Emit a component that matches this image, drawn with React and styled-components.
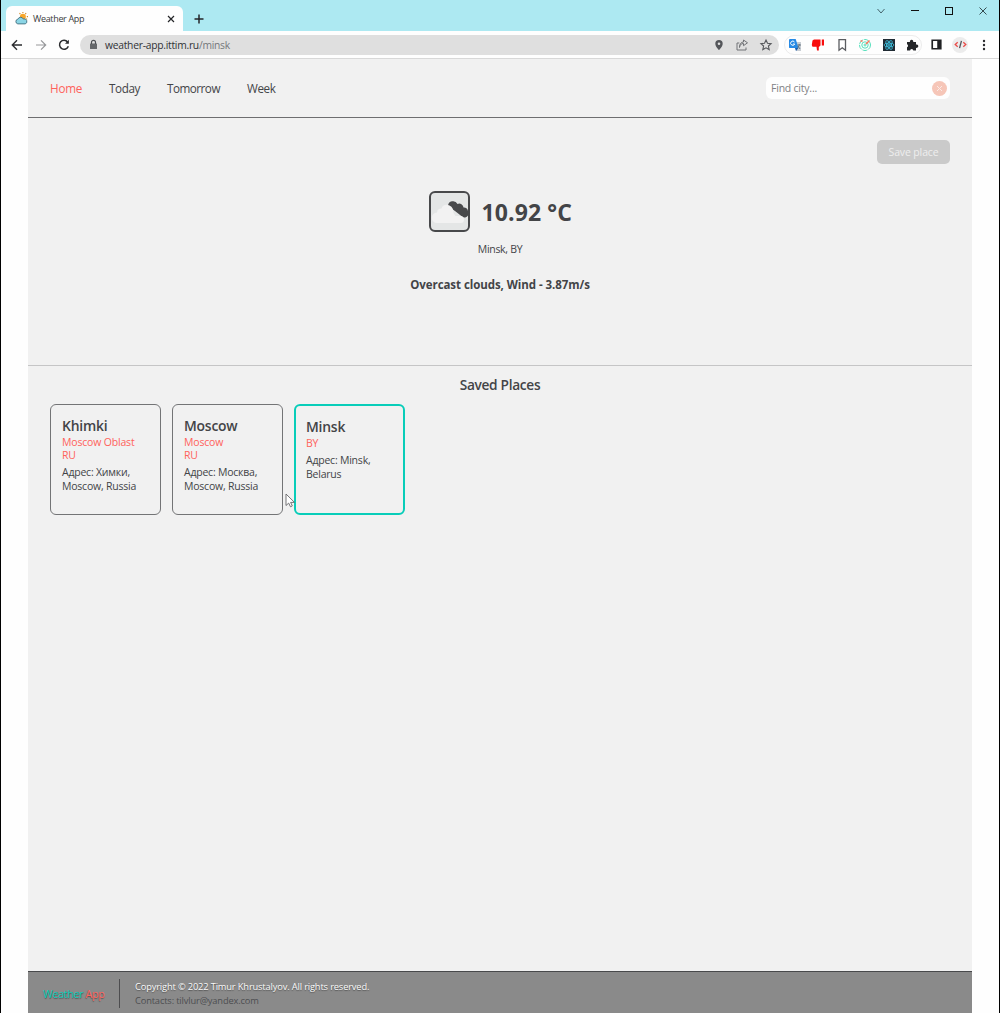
import React from "react";
import styled, { createGlobalStyle } from "styled-components";

const ink = "#434447";
const coral = "#ff625b";
const teal = "#08cdb9";

const GlobalStyle = createGlobalStyle`
  * { box-sizing: border-box; }
  body { margin: 0; background: #fefefe; font-family: "Open Sans", "Noto Sans", sans-serif; color: ${ink}; }
  h1, h2, h3, p { margin: 0; }
`;

const Window = styled.div`
  width: 1000px;
  height: 1013px;
  display: flex;
  flex-direction: column;
  overflow: hidden;
  position: relative;
  border: solid #000;
  border-width: 0 1px;
`;

const TabStrip = styled.div`
  height: 31px;
  flex: none;
  display: flex;
  align-items: flex-end;
  background: #ade9f2;
  padding-left: 5px;
`;

const Tab = styled.div`
  width: 177px;
  height: 25px;
  display: flex;
  align-items: center;
  padding: 0 7px 0 9px;
  background: #fefefe;
  border-radius: 6px 6px 0 0;
`;

const TabTitle = styled.span`
  flex: 1;
  margin-left: 5px;
  font-size: 9px;
  line-height: 12px;
  letter-spacing: -0.34px;
  color: #3a3c40;
  white-space: nowrap;
`;

const NewTab = styled.div`
  height: 25px;
  margin-left: 11px;
  display: flex;
  align-items: center;
`;

const WindowControls = styled.div`
  margin-left: auto;
  align-self: flex-start;
  height: 22px;
  display: flex;
  align-items: center;
  gap: 24px;
  padding-right: 11px;
`;

const Toolbar = styled.div`
  height: 28px;
  flex: none;
  display: flex;
  align-items: center;
  padding: 0 7px 0 9px;
  border-bottom: 1px solid #d8d8d8;
`;

const NavButtons = styled.div`
  display: flex;
  gap: 9.5px;
  width: 70px;
`;

const Omnibox = styled.div`
  width: 699px;
  height: 20px;
  display: flex;
  align-items: center;
  padding: 0 6px 0 8px;
  border-radius: 10px;
  background: #dfdfdf;
`;

const Url = styled.span`
  flex: 1;
  margin-left: 6px;
  font-size: 10.3px;
  line-height: 14px;
  letter-spacing: -0.26px;
  color: #303236;
  span { color: #74777b; }
`;

const OmniIcons = styled.div`
  display: flex;
  gap: 9.7px;
`;

const Extensions = styled.div`
  width: 138px;
  height: 20px;
  margin-left: 5px;
  display: flex;
  align-items: center;
  justify-content: space-between;
  padding: 0 2px 0 3px;
  border: 1px solid #ececec;
  border-radius: 10px;
`;

const BrowserMenu = styled.div`
  display: flex;
  align-items: center;
  margin-left: 8px;
  gap: 9px;
`;

const Avatar = styled.div`
  width: 16px;
  height: 16px;
  display: grid;
  place-items: center;
  border-radius: 50%;
  background: #ececec;
`;

const AppFrame = styled.div`
  flex: 1;
  width: 944px;
  margin: 0 27px;
  display: flex;
  flex-direction: column;
  background: #f1f1f1;
`;

const Header = styled.header`
  height: 59px;
  display: flex;
  align-items: center;
  justify-content: space-between;
  padding: 0 22px;
  border-bottom: 1px solid #6e6e70;
`;

const Nav = styled.nav`
  display: flex;
  gap: 27px;
`;

const NavLink = styled.a`
  width: ${(p) => p.$width}px;
  font-size: 11.7px;
  line-height: 18px;
  letter-spacing: ${(p) => p.$track || 0}px;
  white-space: nowrap;
  color: ${(p) => (p.$active ? coral : ink)};
`;

const Search = styled.div`
  width: 184px;
  height: 22px;
  display: flex;
  align-items: center;
  justify-content: space-between;
  padding: 0 3px 0 5px;
  border-radius: 6px;
  background: #fefefe;
  color: #808184;
  font-size: 10.5px;
  letter-spacing: -0.22px;
`;

const Clear = styled.span`
  width: 15px;
  height: 15px;
  display: grid;
  place-items: center;
  border-radius: 50%;
  background: #f6c6b8;
`;

const Current = styled.main`
  height: 248px;
  display: flex;
  flex-direction: column;
  align-items: center;
  padding: 22px 22px 0;
  border-bottom: 1px solid #c5c5c6;
`;

const SaveButton = styled.button`
  width: 73px;
  height: 24px;
  align-self: flex-end;
  border: 0;
  padding: 0;
  border-radius: 5px;
  background: #cacaca;
  color: #eeeeee;
  font: 10.5px/24px "Open Sans", sans-serif;
  letter-spacing: -0.13px;
`;

const Reading = styled.div`
  height: 41px;
  margin-top: 27px;
  display: flex;
  align-items: center;
  gap: 12px;
`;

const WeatherTile = styled.div`
  width: 41px;
  height: 41px;
  border: 2px solid #48494b;
  border-radius: 6px;
  background: #e4e6e6;
  overflow: hidden;
  svg { display: block; }
`;

const Temperature = styled.h1`
  width: 90px;
  font-size: 23px;
  line-height: 30px;
  font-weight: 700;
  letter-spacing: 0.1px;
  white-space: nowrap;
`;

const Location = styled.p`
  margin-top: 9px;
  font-size: 10.5px;
  line-height: 16px;
  letter-spacing: -0.3px;
`;

const Conditions = styled.p`
  margin-top: 19px;
  font-size: 11.5px;
  line-height: 18px;
  font-weight: 700;
  letter-spacing: -0.06px;
`;

const Saved = styled.section`
  flex: 1;
  padding: 9px 22px 0;
`;

const SavedTitle = styled.h2`
  font-size: 13.7px;
  line-height: 20px;
  font-weight: 600;
  letter-spacing: -0.3px;
  text-align: center;
`;

const Cards = styled.div`
  display: flex;
  gap: 11px;
  margin-top: 9px;
`;

const Card = styled.article`
  width: 111px;
  height: 111px;
  border: ${(p) => (p.$selected ? `2px solid ${teal}` : "1px solid #737476")};
  border-radius: 6px;
  padding: 11px 0 0 ${(p) => (p.$selected ? 10 : 11)}px;
  white-space: nowrap;
`;

const CityName = styled.h3`
  font-size: 13.9px;
  line-height: 19.5px;
  font-weight: 600;
  letter-spacing: -0.22px;
`;

const Region = styled.p`
  font-size: 10.5px;
  line-height: 13.3px;
  letter-spacing: -0.18px;
  color: ${coral};
`;

const Address = styled.p`
  margin-top: 4px;
  font-size: 10.5px;
  line-height: 13.7px;
  letter-spacing: -0.22px;
`;

const Footer = styled.footer`
  height: 42px;
  flex: none;
  display: flex;
  align-items: center;
  border-top: 1px solid #48494b;
  background: #8a8a8a;
  padding: 2px 0 0 15px;
`;

const Brand = styled.div`
  width: 77px;
  height: 29px;
  border-right: 1px solid #4d4d4f;
  font-size: 10.7px;
  line-height: 31px;
  letter-spacing: -0.35px;
  color: ${teal};
  text-shadow: 0 1px 1px #555;
  span { color: ${coral}; }
`;

const Legal = styled.div`
  margin-left: 15px;
  padding-top: 1px;
  font-size: 9.3px;
  line-height: 14px;
  letter-spacing: -0.15px;
  color: #fafafa;
  text-shadow: 0 1px 1px #555;
`;

const Contacts = styled.p`
  color: #4d4e51;
  text-shadow: none;
`;

const Pointer = styled.svg`
  position: absolute;
  left: 284px;
  top: 493px;
`;

const Glyph = ({ size = 14, box = "0 0 14 14", children, ...rest }) => (
  <svg width={size} height={size} viewBox={box} fill="none" stroke="#4e5054" strokeWidth="1.2" {...rest}>{children}</svg>
);

const links = [
  { label: "Home", width: 32, active: true, track: -0.2 },
  { label: "Today", width: 31, track: -0.38 },
  { label: "Tomorrow", width: 53, track: -0.5 },
  { label: "Week", width: 30, track: -0.4 },
];

const places = [
  { city: "Khimki", region: ["Moscow Oblast", "RU"], address: ["Адрес: Химки,", "Moscow, Russia"] },
  { city: "Moscow", region: ["Moscow", "RU"], address: ["Адрес: Москва,", "Moscow, Russia"] },
  { city: "Minsk", region: ["BY"], address: ["Адрес: Minsk,", "Belarus"], selected: true },
];

function Browser() {
  return (
    <>
      <TabStrip>
        <Tab>
          <Glyph size={13} stroke="none">
            <circle cx="8.5" cy="5" r="3.2" fill="#f8a629" />
            <path d="M8.5 0v1.2M12 1.2l-1 1M14 5h-1.3M4.8 1.2l1 1M13 8l-1-.8" stroke="#d58b27" />
            <path d="M3 12.8a2.6 2.6 0 0 1 .1-5.1A3.2 3.2 0 0 1 9 7.6a2.7 2.7 0 0 1 2 5.2Z" fill="#8bd5e5" stroke="#386778" strokeWidth=".9" />
          </Glyph>
          <TabTitle>Weather App</TabTitle>
          <Glyph size={10} box="0 0 10 10" stroke="#252629"><path d="m2 2 6 6M8 2 2 8" /></Glyph>
        </Tab>
        <NewTab><Glyph size={10} box="0 0 10 10" stroke="#242529" strokeWidth="1.5"><path d="M.5 5h9M5 .5v9" /></Glyph></NewTab>
        <WindowControls>
          <Glyph size={10} box="0 0 10 10" stroke="#46646c" strokeWidth="1"><path d="m1.5 3 3.5 4 3.5-4" /></Glyph>
          <Glyph size={10} box="0 0 10 10" stroke="#111" strokeWidth="1"><path d="M1 4.5h8" /></Glyph>
          <Glyph size={10} box="0 0 10 10" stroke="#111" strokeWidth="1"><rect x="1.5" y="1.5" width="7" height="7" /></Glyph>
          <Glyph size={10} box="0 0 10 10" stroke="#354c51" strokeWidth="1"><path d="m1.5 1.5 7 7m0-7-7 7" /></Glyph>
        </WindowControls>
      </TabStrip>
      <Toolbar>
        <NavButtons>
          <Glyph stroke="#2b2c2f" strokeWidth="1.4"><path d="M12 7H2.5M7 2.3 2.3 7 7 11.7" /></Glyph>
          <Glyph stroke="#97989a"><path d="M2 7h9.5M7 2.3 11.7 7 7 11.7" /></Glyph>
          <Glyph stroke="#2b2c2f" strokeWidth="1.5"><path d="M11.3 8.2a4.5 4.5 0 1 1-.7-4.2" /><path d="M11.9 1.8v4H8Z" fill="#2b2c2f" stroke="none" /></Glyph>
        </NavButtons>
        <Omnibox>
          <Glyph size={11} box="0 0 11 11"><rect x="2" y="4.5" width="7" height="5.5" rx=".5" fill="#65676a" stroke="none" /><path d="M3.5 5V3.3a2 2 0 0 1 4 0V5" /></Glyph>
          <Url>weather-app.ittim.ru<span>/minsk</span></Url>
          <OmniIcons>
            <Glyph stroke="none"><path fillRule="evenodd" fill="#54565a" d="M7 2a3.7 3.7 0 0 0-3.7 3.7C3.3 8.5 7 12 7 12s3.7-3.5 3.7-6.3A3.7 3.7 0 0 0 7 2Zm0 2.4a1.3 1.3 0 1 1 0 2.6 1.3 1.3 0 0 1 0-2.6Z" /></Glyph>
            <Glyph stroke="#707276" strokeWidth="1"><path d="M4.3 5H2v7h9V9.5M4.5 9.5c.2-2.5 1.6-4 4-4V7.7L12.5 4.8 8.5 2v2C6 4 4.5 6 4.5 9.5Z" /></Glyph>
            <Glyph stroke="#56585c" strokeWidth="1.1"><path d="m7 2 1.5 3.2 3.6.4L9.4 8l.8 3.6L7 9.8l-3.2 1.8.8-3.6L1.9 5.6l3.6-.4Z" /></Glyph>
          </OmniIcons>
        </Omnibox>
        <Extensions>
          <Glyph stroke="none">
            <path d="M5 4h8v9H8Z" fill="#c9ced4" />
            <path d="M1.5 1h6.2l2.8 9h-9A.8.8 0 0 1 1 9.500V1.700Z" fill="#278ae5" />
            <path d="M7 10h3.500L8 13Z" fill="#175eb1" />
            <path d="M6.500 4a2.100 2.100 0 1 0 .2 2H5" stroke="#fff" strokeWidth="1" />
            <path d="M9.500 7H13M11.200 6v1c-.3 1.500-1 2.500-1.800 3M10 8l2 3" stroke="#60717b" strokeWidth=".9" />
          </Glyph>
          <Glyph stroke="none"><path d="M1.500 2.500 3 1.500h6.500v6L7.800 9v3.500H6L5.500 8.800H1.500L.8 7ZM10.800 1.500H13v6h-2.200Z" fill="#f80c0c" /></Glyph>
          <Glyph stroke="#5a5c60" strokeWidth="1.300"><path d="M4 1.700h6.500v10.500L7.250 9.700 4 12.200Z" /></Glyph>
          <Glyph stroke="#53dfbb" strokeWidth="1">
            <circle cx="7" cy="7" r="5.500" strokeDasharray="5 1" /><circle cx="7" cy="7" r="3.200" /><circle cx="7" cy="7" r="1" />
            <path d="M2.500 3h2M8 6l3.500-3.500" stroke="#ff765d" strokeWidth="1.500" />
          </Glyph>
          <Glyph stroke="#3fc4e2" strokeWidth=".8">
            <rect x="1" y="1" width="12" height="12" fill="#202a33" stroke="none" />
            <ellipse cx="7" cy="7" rx="5" ry="2" /><ellipse cx="7" cy="7" rx="5" ry="2" transform="rotate(60 7 7)" /><ellipse cx="7" cy="7" rx="5" ry="2" transform="rotate(120 7 7)" /><circle cx="7" cy="7" r=".8" />
          </Glyph>
          <Glyph stroke="none"><path d="M2 4h3a1.700 1.700 0 1 1 3.200 0h2.800v2.600a1.700 1.700 0 1 1 0 3.200v2.700H8.300a1.600 1.600 0 0 0-3.200 0H2V9.300a1.600 1.600 0 0 0 0-3Z" fill="#25272a" /></Glyph>
        </Extensions>
        <BrowserMenu>
          <Glyph size={13} stroke="none"><path fillRule="evenodd" d="M1.500 1.500h11v11h-11Zm1.800 1.800v7.400h4.500V3.300Z" fill="#202124" /></Glyph>
          <Avatar><Glyph size={13} stroke="#ea4b48" strokeWidth="1.400"><path d="M4 4.500 1.300 7 4 9.500M10 4.500 12.700 7 10 9.500" /><path d="m8 3-2 8" stroke="#50545a" /></Glyph></Avatar>
          <Glyph size={14} stroke="none"><g fill="#292b2e"><circle cx="7" cy="3" r="1.200" /><circle cx="7" cy="7" r="1.200" /><circle cx="7" cy="11" r="1.200" /></g></Glyph>
        </BrowserMenu>
      </Toolbar>
    </>
  );
}

export default function App() {
  return (
    <Window>
      <GlobalStyle />
      <Browser />
      <AppFrame>
        <Header>
          <Nav>
            {links.map((l) => <NavLink key={l.label} $width={l.width} $active={l.active} $track={l.track}>{l.label}</NavLink>)}
          </Nav>
          <Search>
            Find city...
            <Clear><Glyph size={7} box="0 0 7 7" stroke="#fbeae6" strokeWidth="1"><path d="m1 1 5 5m0-5L1 6" /></Glyph></Clear>
          </Search>
        </Header>
        <Current>
          <SaveButton>Save place</SaveButton>
          <Reading>
            <WeatherTile>
              <svg width="37" height="37" viewBox="0 0 37 37">
                <path d="M17 13a5 5 0 0 1 9.500-2 4.200 4.200 0 0 1 6 3.500 4 4 0 0 1 4.500 3.500v4.500a4 4 0 0 1-6 1L24 18Z" fill="#48494b" />
                <path d="M6 30a5 5 0 0 1 0-10.500c.3-3 1.800-4 4.500-4 1-4 5-4.500 8-3 3 1.500 4 4 4 7.500l2 3h5a3.500 3.500 0 0 1 0 7Z" fill="#f2f2f2" />
              </svg>
            </WeatherTile>
            <Temperature>10.92 °C</Temperature>
          </Reading>
          <Location>Minsk, BY</Location>
          <Conditions>Overcast clouds, Wind - 3.87m/s</Conditions>
        </Current>
        <Saved>
          <SavedTitle>Saved Places</SavedTitle>
          <Cards>
            {places.map((p) => (
              <Card key={p.city} $selected={p.selected}>
                <CityName>{p.city}</CityName>
                {p.region.map((r) => <Region key={r}>{r}</Region>)}
                <Address>{p.address[0]}<br />{p.address[1]}</Address>
              </Card>
            ))}
          </Cards>
        </Saved>
        <Footer>
          <Brand>Weather <span>App</span></Brand>
          <Legal>
            <p>Copyright © 2022 Timur Khrustalyov. All rights reserved.</p>
            <Contacts>Contacts: tilvlur@yandex.com</Contacts>
          </Legal>
        </Footer>
      </AppFrame>
      <Pointer width="11" height="16" viewBox="0 0 11 16"><path d="M1 1v11.500l2.700-2.400 1.800 3.700 1.800-.9-1.700-3.500H9.500Z" fill="#fff" stroke="#66676a" strokeWidth=".9" /></Pointer>
    </Window>
  );
}
